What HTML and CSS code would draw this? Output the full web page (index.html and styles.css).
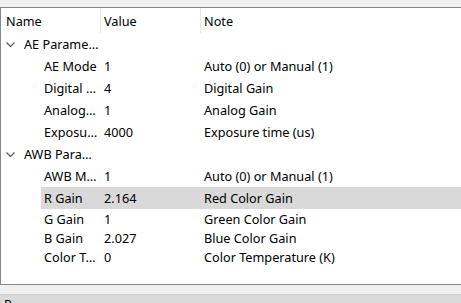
FILE: index.html
```html
<!DOCTYPE html>
<html>
<head>
<meta charset="utf-8">
<link rel="stylesheet" href="styles.css">
</head>
<body>
<div class="top"></div>
<div class="tree">
  <div class="header">
    <div class="hcell name">Name</div>
    <div class="hcell value">Value</div>
    <div class="hcell note">Note</div>
  </div>
  <div class="row group">
    <div class="cell name"><svg class="chev" width="9" height="5" viewBox="0 0 9 5"><polyline points="0.5,0.5 4.5,4.5 8.5,0.5" fill="none" stroke="#5a5a5a" stroke-width="1.2"/></svg>AE Parame…</div>
    <div class="cell value"></div>
    <div class="cell note"></div>
  </div>
  <div class="row child">
    <div class="cell name">AE Mode</div>
    <div class="cell value">1</div>
    <div class="cell note">Auto (0) or Manual (1)</div>
  </div>
  <div class="row child">
    <div class="cell name">Digital …</div>
    <div class="cell value">4</div>
    <div class="cell note">Digital Gain</div>
  </div>
  <div class="row child">
    <div class="cell name">Analog…</div>
    <div class="cell value">1</div>
    <div class="cell note">Analog Gain</div>
  </div>
  <div class="row child">
    <div class="cell name">Exposu…</div>
    <div class="cell value">4000</div>
    <div class="cell note">Exposure time (us)</div>
  </div>
  <div class="row group">
    <div class="cell name"><svg class="chev" width="9" height="5" viewBox="0 0 9 5"><polyline points="0.5,0.5 4.5,4.5 8.5,0.5" fill="none" stroke="#5a5a5a" stroke-width="1.2"/></svg>AWB Para…</div>
    <div class="cell value"></div>
    <div class="cell note"></div>
  </div>
  <div class="row child">
    <div class="cell name">AWB M…</div>
    <div class="cell value">1</div>
    <div class="cell note">Auto (0) or Manual (1)</div>
  </div>
  <div class="row child selected">
    <div class="cell name">R Gain</div>
    <div class="cell value">2.164</div>
    <div class="cell note">Red Color Gain</div>
  </div>
  <div class="row child short">
    <div class="cell name">G Gain</div>
    <div class="cell value">1</div>
    <div class="cell note">Green Color Gain</div>
  </div>
  <div class="row child short">
    <div class="cell name">B Gain</div>
    <div class="cell value">2.027</div>
    <div class="cell note">Blue Color Gain</div>
  </div>
  <div class="row child short">
    <div class="cell name">Color T…</div>
    <div class="cell value">0</div>
    <div class="cell note">Color Temperature (K)</div>
  </div>
</div>
<div class="gap"></div>
<div class="status">P</div>
</body>
</html>
```

FILE: styles.css
```css
html, body {
  margin: 0;
  padding: 0;
  width: 461px;
  height: 303px;
  overflow: hidden;
  background: #f0f0f0;
  font-family: "Noto Sans", "Open Sans", sans-serif;
  font-size: 12.7px;
  color: #000;
}

.top {
  height: 7px;
  background: #f0f0f0;
}

.tree {
  height: 276px;
  background: #fff;
  border-top: 1px solid #828790;
  border-left: 1px solid #828790;
  border-bottom: 1px solid #828790;
  display: flex;
  flex-direction: column;
}

.header {
  display: grid;
  grid-template-columns: 100px 100px 1fr;
  height: 25px;
}

.hcell {
  display: flex;
  align-items: center;
  border-right: 1px solid #e5e5e5;
}

.hcell.name { padding-left: 5px; }
.hcell.value { padding-left: 3px; }
.hcell.note { padding-left: 3px; border-right: none; }

.row {
  display: grid;
  grid-template-columns: 100px 100px 1fr;
  height: 22px;
}

.row.short { height: 19px; }

.row.selected {
  background: linear-gradient(90deg, transparent 40px, #d9d9d9 40px);
}

.cell {
  display: flex;
  align-items: center;
  white-space: nowrap;
  overflow: hidden;
}

.cell.value, .cell.note { padding-left: 3px; }

.row.group .cell.name { padding-left: 5px; }
.row.child .cell.name { padding-left: 43px; }

.chev {
  margin-right: 9px;
  flex: none;
}

.gap {
  height: 9px;
  background: #f0f0f0;
  border-bottom: 1px solid #cfcfcf;
}

.status {
  height: 20px;
  background: #dadada;
  padding-left: 4px;
  line-height: 18px;
}
```
